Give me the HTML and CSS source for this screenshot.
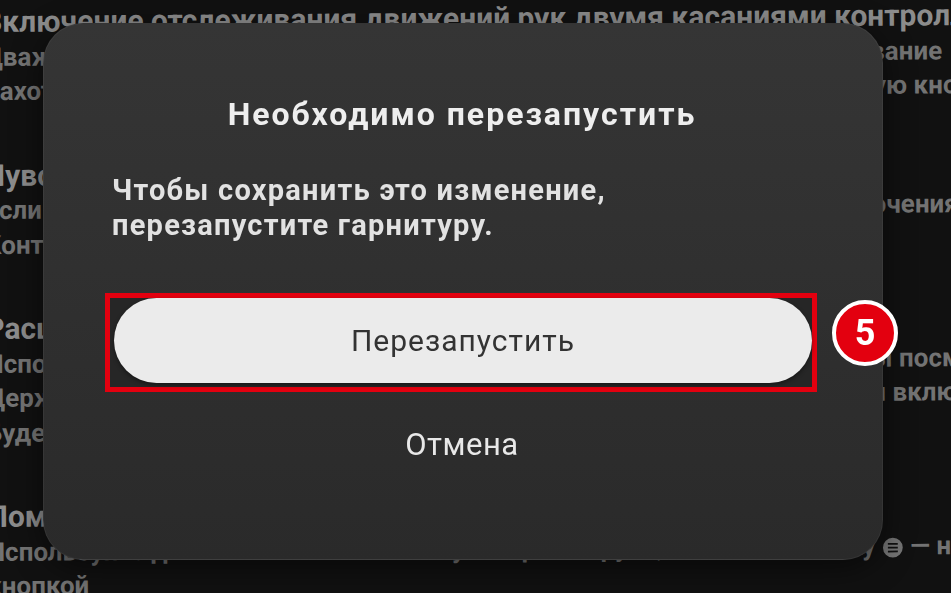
FILE: index.html
```html
<!DOCTYPE html>
<html lang="ru">
<head>
    <meta charset="UTF-8">
    <meta name="viewport" content="width=device-width, initial-scale=1.0">
    <title>Настройки</title>
    <link rel="stylesheet" href="styles.css">
</head>
<body>
    <div class="settings">
        <section class="group">
            <h2>Включение отслеживания движений рук двумя касаниями контроллеров</h2>
            <p>Дважды коснитесь контроллерами друг друга, чтоб включить отслеживание</p>
            <p>Захотите вернуться к контроллерам — просто возьмите и нажмите любую кнопку.</p>
        </section>
        <section class="group">
            <h2>Чувствительность</h2>
            <p>Если касание не срабатывает, увеличьте чувствительность для переключения</p>
            <p>Контроллеры должны быть включены.</p>
        </section>
        <section class="group">
            <h2>Расширенный режим</h2>
            <p>Используйте отслеживание рук в поддерживаемых приложениях, чтобы посмотреть</p>
            <p>Держите руки перед собой, чтобы гарнитура всегда хорошо их видела, и включала режим</p>
            <p>Будет работать не во всех приложениях.</p>
        </section>
        <section class="group">
            <h2>Помощь</h2>
            <p>Используйте для вызова меню кнопку на правой руке, а именно кнопку
                <svg class="menu-icon" viewBox="0 0 20 20" width="22" height="22">
                    <circle cx="10" cy="10" r="9" fill="#737373"/>
                    <path d="M5.5 6.5h9M5.5 10h9M5.5 13.5h9" stroke="#111" stroke-width="1.6"/>
                </svg>
                — нажмите и держите.</p>
            <p>кнопкой</p>
        </section>
    </div>

    <div class="overlay">
        <div class="dialog">
            <h1 class="dialog-title">Необходимо перезапустить</h1>
            <p class="dialog-text">Чтобы сохранить это изменение,<br>перезапустите гарнитуру.</p>
            <div class="highlight">
                <button class="btn-restart">Перезапустить</button>
                <span class="step">5</span>
            </div>
            <button class="btn-cancel">Отмена</button>
        </div>
    </div>
</body>
</html>
```

FILE: styles.css
```css
* {
    box-sizing: border-box;
    margin: 0;
    padding: 0;
}

html, body {
    height: 100%;
    overflow: hidden;
}

body {
    font-family: Roboto, 'Noto Sans', sans-serif;
    background: #111111;
    color: #fff;
}

/* settings list behind the dialog */
.settings {
    padding-top: 5px;
    margin-left: -17px;
    transform: rotate(-0.4deg);
    transform-origin: left top;
}

.group {
    margin-bottom: 50px;
}

.group h2,
.group p {
    white-space: nowrap;
    line-height: 34.5px;
}

.group h2 {
    font-size: 30px;
    font-weight: 700;
    color: #8c8c8c;
}

.group p {
    font-size: 26px;
    font-weight: 700;
    color: #737373;
}

.menu-icon {
    vertical-align: -4px;
}

/* restart dialog */
.overlay {
    position: fixed;
    inset: 0;
    padding: 23px 0 0 43px;
}

.dialog {
    width: 840px;
    height: 537px;
    padding: 70px 70px 0 68px;
    border-radius: 40px;
    background: linear-gradient(to bottom, #353535, #2a2a2a);
    border: 1px solid rgba(255, 255, 255, 0.05);
    box-shadow: 0 8px 30px rgba(0, 0, 0, 0.5);
    display: flex;
    flex-direction: column;
}

.dialog-title {
    font-size: 32px;
    font-weight: 700;
    line-height: 40px;
    letter-spacing: 2px;
    text-align: center;
    color: #eeeeee;
}

.dialog-text {
    margin-top: 39px;
    font-size: 29px;
    font-weight: 700;
    line-height: 35px;
    letter-spacing: 1.25px;
    color: #e2e2e2;
}

.highlight {
    position: relative;
    margin: 50px -5px 0 -7px;
    padding: 0 0 4px 4px;
    border: 5px solid #e3000f;
    background: #262626;
}

.btn-restart {
    display: block;
    width: 100%;
    height: 85px;
    border: none;
    border-radius: 43px;
    background: #ebebeb;
    color: #333;
    font-family: inherit;
    font-size: 30px;
    font-weight: 400;
    letter-spacing: 1px;
    box-shadow: 0 2px 4px rgba(0, 0, 0, 0.4);
}

.step {
    position: absolute;
    top: 2px;
    right: -86px;
    width: 66px;
    height: 66px;
    border-radius: 50%;
    border: 4px solid #fff;
    background: #e3000f;
    color: #fff;
    font-size: 36px;
    font-weight: 700;
    display: flex;
    align-items: center;
    justify-content: center;
}

.btn-cancel {
    align-self: center;
    margin-top: 33px;
    background: none;
    border: none;
    color: #e8e8e8;
    font-family: inherit;
    font-size: 31px;
    font-weight: 400;
    letter-spacing: 0.5px;
    line-height: 40px;
}
```
